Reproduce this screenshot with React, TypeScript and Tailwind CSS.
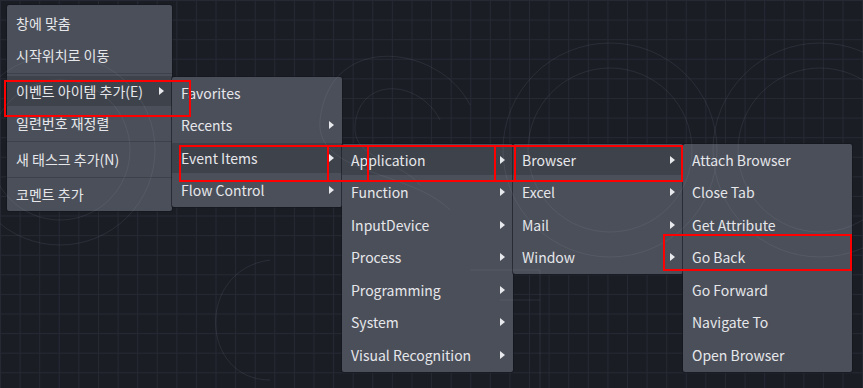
import React from 'react';

type Item = { label: string; sub?: boolean; active?: boolean; sepAfter?: boolean };

const mainMenu: Item[] = [
  { label: '창에 맞춤' },
  { label: '시작위치로 이동', sepAfter: true },
  { label: '이벤트 아이템 추가(E)', sub: true, active: true },
  { label: '일련번호 재정렬', sepAfter: true },
  { label: '새 태스크 추가(N)', sepAfter: true },
  { label: '코멘트 추가' },
];

const sourceMenu: Item[] = [
  { label: 'Favorites' },
  { label: 'Recents', sub: true },
  { label: 'Event Items', sub: true, active: true },
  { label: 'Flow Control', sub: true },
];

const categoryMenu: Item[] = [
  { label: 'Application', sub: true, active: true },
  { label: 'Function', sub: true },
  { label: 'InputDevice', sub: true },
  { label: 'Process', sub: true },
  { label: 'Programming', sub: true },
  { label: 'System', sub: true },
  { label: 'Visual Recognition', sub: true },
];

const appMenu: Item[] = [
  { label: 'Browser', sub: true, active: true },
  { label: 'Excel', sub: true },
  { label: 'Mail', sub: true },
  { label: 'Window', sub: true },
];

const browserMenu: Item[] = [
  { label: 'Attach Browser' },
  { label: 'Close Tab' },
  { label: 'Get Attribute' },
  { label: 'Go Back' },
  { label: 'Go Forward' },
  { label: 'Navigate To' },
  { label: 'Open Browser' },
];

function Arrow() {
  return (
    <svg width="5" height="8" viewBox="0 0 5 8" className="shrink-0">
      <polygon points="0,0 5,4 0,8" fill="#e8e9ec" />
    </svg>
  );
}

function Menu({ items, className }: { items: Item[]; className: string }) {
  return (
    <div className={`absolute flex flex-col rounded-[2px] bg-[#4b4f5a] shadow-[0_0_0_1px_rgba(20,22,28,0.6)] ${className}`}>
      {items.map(item => (
        <React.Fragment key={item.label}>
          <div className="flex h-[32.5px] items-center">
            <div
              className={`flex h-[30px] flex-1 items-center justify-between pb-[1px] pl-[9px] pr-[8px] ${
                item.active ? 'bg-[#3e424b]' : ''
              }`}
            >
              <span className="text-[14px] leading-none text-[#e6e7ea]">{item.label}</span>
              {item.sub && <Arrow />}
            </div>
          </div>
          {item.sepAfter && <div className="my-[1px] h-px bg-[#3d414a]" />}
        </React.Fragment>
      ))}
    </div>
  );
}

// faint logo watermark drawn over the canvas and the menus
function Watermark() {
  return (
    <svg className="pointer-events-none absolute inset-0" width="863" height="388" viewBox="0 0 863 388">
      <g fill="none" stroke="rgba(160,165,180,0.12)" strokeWidth="1">
        <circle cx="60" cy="150" r="95" />
        <circle cx="60" cy="150" r="70" />
        <path d="M470 105 C440 45 330 30 320 120 C315 175 410 170 450 210" />
        <path d="M440 120 C420 80 360 75 355 125 C352 160 400 160 420 185" />
        <circle cx="610" cy="150" r="107" />
        <circle cx="610" cy="150" r="82" />
        <circle cx="820" cy="150" r="107" />
        <circle cx="820" cy="150" r="82" />
        <path d="M270 380 C200 380 195 270 270 260" />
        <path d="M470 270 H540 V388 M500 300 H540" />
      </g>
    </svg>
  );
}

function Box({ className }: { className: string }) {
  return <div className={`pointer-events-none absolute border-2 border-[#ff0000] ${className}`} />;
}

export default function App() {
  return (
    <div
      className="relative h-[388px] w-[863px] overflow-hidden bg-[#1b1d25] bg-[linear-gradient(to_right,#262933_1px,transparent_1px),linear-gradient(to_bottom,#262933_1px,transparent_1px)] bg-[size:19.6px_19.6px]"
      style={{ fontFamily: '"Noto Sans CJK KR", "Noto Sans", sans-serif' }}
    >
      <Menu items={mainMenu} className="left-[7px] top-[5px] w-[165px] pt-[2px]" />
      <Menu items={sourceMenu} className="left-[172px] top-[77px] w-[170px]" />
      <Menu items={categoryMenu} className="left-[342px] top-[144px] w-[171px]" />
      <Menu items={appMenu} className="left-[513px] top-[144px] w-[170px]" />
      <Menu items={browserMenu} className="left-[683px] top-[144px] w-[169px]" />

      <Watermark />

      <Box className="left-[4px] top-[80px] h-[37px] w-[187px]" />
      <Box className="left-[179px] top-[145px] h-[37px] w-[150px]" />
      <Box className="left-[327px] top-[145px] h-[37px] w-[42px]" />
      <Box className="left-[367px] top-[145px] h-[37px] w-[129px]" />
      <Box className="left-[494px] top-[145px] h-[37px] w-[22px]" />
      <Box className="left-[514px] top-[145px] h-[37px] w-[169px]" />
      <Box className="left-[663px] top-[234px] h-[37px] w-[189px]" />
    </div>
  );
}
